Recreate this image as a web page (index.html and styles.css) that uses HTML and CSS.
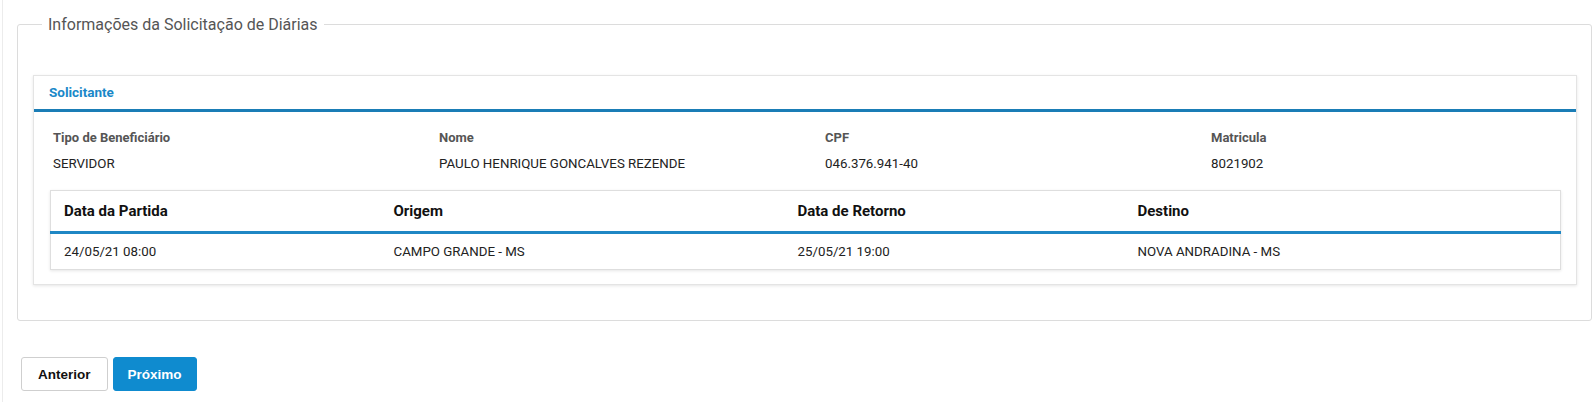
FILE: index.html
```html
<!DOCTYPE html>
<html lang="pt-BR">
<head>
<meta charset="utf-8">
<title>Informações da Solicitação de Diárias</title>
<link rel="stylesheet" href="styles.css">
</head>
<body>
<div class="page">
  <fieldset class="group">
    <legend class="group-title">Informações da Solicitação de Diárias</legend>
    <section class="card">
      <header class="card-header">Solicitante</header>
      <div class="card-body">
        <div class="info-row">
          <div class="info-col">
            <div class="info-label">Tipo de Beneficiário</div>
            <div class="info-value">SERVIDOR</div>
          </div>
          <div class="info-col">
            <div class="info-label">Nome</div>
            <div class="info-value">PAULO HENRIQUE GONCALVES REZENDE</div>
          </div>
          <div class="info-col">
            <div class="info-label">CPF</div>
            <div class="info-value">046.376.941-40</div>
          </div>
          <div class="info-col">
            <div class="info-label">Matricula</div>
            <div class="info-value">8021902</div>
          </div>
        </div>
        <table class="trips">
          <colgroup>
            <col class="c1"><col class="c2"><col class="c3"><col class="c4">
          </colgroup>
          <thead>
            <tr>
              <th>Data da Partida</th>
              <th>Origem</th>
              <th>Data de Retorno</th>
              <th>Destino</th>
            </tr>
          </thead>
          <tbody>
            <tr>
              <td>24/05/21 08:00</td>
              <td>CAMPO GRANDE - MS</td>
              <td>25/05/21 19:00</td>
              <td>NOVA ANDRADINA - MS</td>
            </tr>
          </tbody>
        </table>
      </div>
    </section>
  </fieldset>
  <div class="actions">
    <button class="btn btn-default" type="button">Anterior</button>
    <button class="btn btn-primary" type="button">Próximo</button>
  </div>
</div>
</body>
</html>
```
FILE: styles.css
```css
* { box-sizing: border-box; }

html, body {
  margin: 0;
  padding: 0;
  background: #ffffff;
  font-family: Roboto, "Liberation Sans", Arial, sans-serif;
  color: #222;
}

body {
  padding-left: 2px;
}

.page {
  border-left: 1px solid #ececec;
  min-height: 402px;
  padding: 15px 2px 0 14px;
}

.group {
  margin: 0;
  border: 1px solid #dcdcdc;
  border-radius: 3px;
  padding: 0 14px 35px 15px;
  min-width: 0;
}

.group-title {
  margin-left: 9px;
  padding: 0 6px;
  font-size: 16px;
  line-height: 19px;
  color: #555;
  font-weight: 400;
}

.card {
  margin-top: 41px;
  border: 1px solid #e4e4e4;
  box-shadow: 0 1px 3px rgba(0, 0, 0, 0.10);
  background: #fff;
}

.card-header {
  height: 36px;
  line-height: 33px;
  padding: 0 15px;
  border-bottom: 3px solid #1a7db6;
  color: #1a88c8;
  font-weight: 700;
  font-size: 13.5px;
}

.card-body {
  padding: 18px 15px 14px 16px;
}

.info-row {
  display: grid;
  grid-template-columns: repeat(4, 1fr);
  margin: 0 -16px 0 -17px;
}

.info-col {
  padding-left: 20px;
}

.info-label {
  font-size: 13px;
  line-height: 16px;
  font-weight: 700;
  color: #555;
}

.info-value {
  margin-top: 10px;
  font-size: 13.3px;
  line-height: 16px;
  color: #222;
}

.trips {
  width: 100%;
  margin-top: 18px;
  border-collapse: collapse;
  table-layout: fixed;
  border: 1px solid #dedede;
  box-shadow: 0 1px 3px rgba(0, 0, 0, 0.10);
}

.trips .c1 { width: 330px; }
.trips .c2 { width: 404px; }
.trips .c3 { width: 340px; }

.trips th {
  text-align: left;
  height: 42px;
  padding: 0 13px;
  font-size: 15px;
  font-weight: 700;
  color: #111;
  border-bottom: 3px solid #1f87c4;
}

.trips td {
  height: 37px;
  padding: 0 13px;
  font-size: 13.3px;
  color: #222;
}

.actions {
  display: flex;
  gap: 5px;
  margin-top: 36px;
  padding-left: 4px;
}

.btn {
  height: 34px;
  border-radius: 3px;
  font-family: "Liberation Sans", Arial, sans-serif;
  font-weight: 700;
  font-size: 13.5px;
  cursor: pointer;
}

.btn-default {
  padding: 0 16px;
  background: #fff;
  border: 1px solid #cfcfcf;
  color: #111;
}

.btn-primary {
  padding: 0 14px;
  background: #0f8bcf;
  border: 1px solid #0f8bcf;
  color: #fff;
}
```
